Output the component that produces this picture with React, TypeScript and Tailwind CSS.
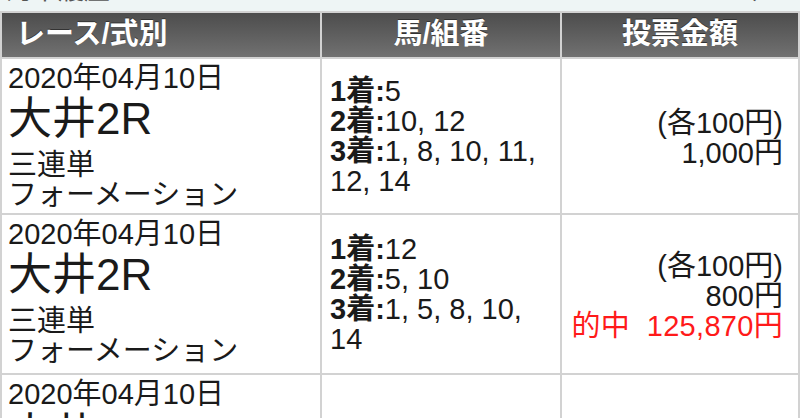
import React from "react"

type Row = {
    date: string
    race: string
    kind: string
    method: string
    picks: { label: string; value: string }[]
    unit: string
    total: string
    hit?: string
    height: string
}

const rows: Row[] = [
    {
        date: "2020年04月10日",
        race: "大井2R",
        kind: "三連単",
        method: "フォーメーション",
        picks: [
            { label: "1着:", value: "5" },
            { label: "2着:", value: "10, 12" },
            { label: "3着:", value: "1, 8, 10, 11, 12, 14" },
        ],
        unit: "(各100円)",
        total: "1,000円",
        height: "h-[156px]",
    },
    {
        date: "2020年04月10日",
        race: "大井2R",
        kind: "三連単",
        method: "フォーメーション",
        picks: [
            { label: "1着:", value: "12" },
            { label: "2着:", value: "5, 10" },
            { label: "3着:", value: "1, 5, 8, 10, 14" },
        ],
        unit: "(各100円)",
        total: "800円",
        hit: "的中\u00a0\u00a0125,870円",
        height: "h-[160px]",
    },
]

const cell = "border-2 border-[#d2d2d2]"

const App = () => {
    return (
        <div className="w-[800px] h-[418px] overflow-hidden bg-white text-[#1a1a1a]" style={{ fontFamily: '"Liberation Sans", "Noto Sans CJK JP", sans-serif' }}>
            <div className="h-[11px] bg-[#eef5f5] overflow-hidden relative">
                <span className="absolute left-[6px] top-[-29px] text-[26px] text-[#555]">的中履歴</span>
                <span className="absolute right-[22px] top-[-29px] text-[26px] text-[#555]">〉</span>
            </div>
            <table className="w-[798px] border-collapse table-fixed">
                <colgroup>
                    <col className="w-[320px]" />
                    <col className="w-[240px]" />
                    <col className="w-[238px]" />
                </colgroup>
                <thead>
                    <tr className="h-[46px] bg-gradient-to-b from-[#4c4c4c] to-[#727272] text-white text-[29px]">
                        <th className={`${cell} text-left pl-[14px] font-semibold [text-shadow:0_-1px_0_#333]`}>レース/式別</th>
                        <th className={`${cell} text-center font-semibold [text-shadow:0_-1px_0_#333]`}>馬/組番</th>
                        <th className={`${cell} text-center font-semibold [text-shadow:0_-1px_0_#333]`}>投票金額</th>
                    </tr>
                </thead>
                <tbody>
                    {rows.map((r, i) => (
                        <tr key={i} className={r.height}>
                            <td className={`${cell} align-top px-[6px] pt-[3px] leading-[32px]`}>
                                <div className="text-[29px]">{r.date}</div>
                                <div className="text-[44px] leading-[50px] mb-[6px]">{r.race}</div>
                                <div className="text-[29px] leading-[30px]">{r.kind}</div>
                                <div className="text-[29px] leading-[30px]">{r.method}</div>
                            </td>
                            <td className={`${cell} align-middle px-[8px] text-[29px] leading-[30px]`}>
                                {r.picks.map((p) => (
                                    <div key={p.label}>
                                        <b>{p.label}</b>{p.value}
                                    </div>
                                ))}
                            </td>
                            <td className={`${cell} align-middle text-right pr-[15px] pt-[4px] text-[29px] leading-[30px]`}>
                                <div>{r.unit}</div>
                                <div>{r.total}</div>
                                {r.hit && <div className="text-[#ff1a1a] tracking-[0.3px]">{r.hit}</div>}
                            </td>
                        </tr>
                    ))}
                    <tr className="h-[60px]">
                        <td className={`${cell} align-top px-[6px] pt-[3px] leading-[32px]`}>
                            <div className="text-[29px]">2020年04月10日</div>
                            <div className="text-[44px] leading-[50px]">大井2R</div>
                        </td>
                        <td className={cell}></td>
                        <td className={cell}></td>
                    </tr>
                </tbody>
            </table>
        </div>
    )
}

export default App
